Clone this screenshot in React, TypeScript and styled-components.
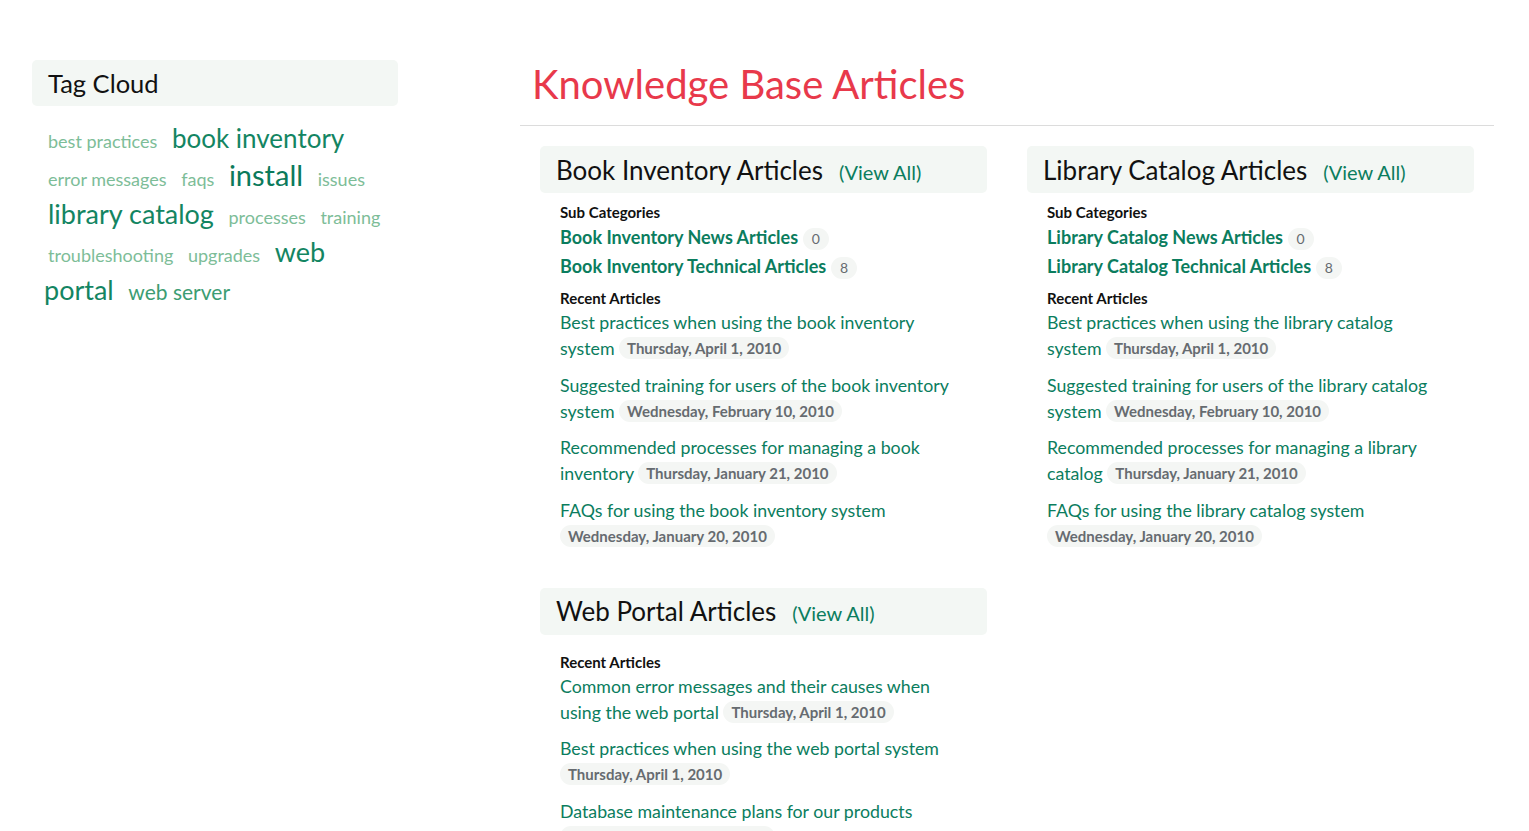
import React from "react";
import styled, { createGlobalStyle } from "styled-components";

const GlobalStyle = createGlobalStyle`
  html, body { margin: 0; padding: 0; background: #ffffff; }
  body { font-family: Lato, "Open Sans", Arial, sans-serif; color: #111; }
  a { text-decoration: none; }
`;

const Page = styled.div`
  display: flex;
  align-items: flex-start;
  padding: 60px 35px 0 32px;
`;

const Sidebar = styled.aside`
  width: 366px;
  flex: none;
`;

const PanelHeader = styled.div`
  height: 46px;
  display: flex;
  align-items: center;
  padding-left: 16px;
  background: #f3f7f4;
  border-radius: 5px;
`;

const SidebarTitle = styled.h2`
  margin: 0;
  font-size: 25.5px;
  font-weight: 400;
  color: #111;
`;

const Cloud = styled.div`
  margin-top: 16px;
  padding: 0 2px 0 12px;
  font-size: 18px;
  line-height: 38px;
`;

const Tag = styled.a<{ $size: number; $color: string }>`
  font-size: ${(p) => p.$size}px;
  line-height: 1;
  color: ${(p) => p.$color};
  padding: 0 4px;
  margin-right: 2px;
`;

const Main = styled.main`
  margin-left: 122px;
  flex: 1;
`;

const Title = styled.h1`
  margin: 0;
  padding-left: 12px;
  font-size: 40px;
  line-height: 48px;
  font-weight: 400;
  color: #e8394b;
`;

const Rule = styled.hr`
  margin: 17px 0 0;
  border: 0;
  border-top: 1px solid #dcdcdc;
`;

const Columns = styled.div`
  display: grid;
  grid-template-columns: 1fr 1fr;
  padding-top: 20px;
`;

const Section = styled.section`
  padding: 0 20px;
  margin-bottom: 39px;
`;

const SectionHeader = styled(PanelHeader)`
  height: 47px;
`;

const SectionTitle = styled.h2`
  margin: 0;
  font-size: 26px;
  font-weight: 400;
  color: #111;
`;

const ViewAll = styled.a`
  margin-left: 16px;
  margin-top: 4px;
  font-size: 20px;
  color: #0b7d5e;
`;

const SectionBody = styled.div`
  padding: 0 30px 0 20px;
`;

const Label = styled.div<{ $gap: number }>`
  margin-top: ${(p) => p.$gap}px;
  font-size: 15px;
  line-height: 22px;
  font-weight: 700;
  color: #111;
`;

const SubRow = styled.div`
  font-size: 18px;
  line-height: 29px;
`;

const SubLink = styled.a`
  font-weight: 700;
  color: #0b7d5e;
`;

const Count = styled.span`
  display: inline-block;
  padding: 0 9px;
  line-height: 22px;
  border-radius: 11px;
  background: #f4f6f4;
  font-size: 14px;
  color: #666b70;
`;

const Article = styled.div`
  font-size: 17.75px;
  line-height: 26px;
  & + & {
    margin-top: 10.5px;
  }
`;

const ArticleLink = styled.a`
  color: #0b7d5e;
`;

const DateBadge = styled.span`
  display: inline-block;
  padding: 0 8px;
  line-height: 22px;
  border-radius: 11px;
  background: #f4f6f4;
  font-size: 15px;
  font-weight: 700;
  color: #666b70;
  vertical-align: 1px;
`;

const tags: { text: string; size: number; color: string }[] = [
  { text: "best practices", size: 18, color: "#7dbd98" },
  { text: "book inventory", size: 26, color: "#138562" },
  { text: "error messages", size: 18, color: "#7dbd98" },
  { text: "faqs", size: 18, color: "#7dbd98" },
  { text: "install", size: 29, color: "#0b7a5b" },
  { text: "issues", size: 18, color: "#7dbd98" },
  { text: "library catalog", size: 27, color: "#138562" },
  { text: "processes", size: 18, color: "#7dbd98" },
  { text: "training", size: 18, color: "#7dbd98" },
  { text: "troubleshooting", size: 18, color: "#7dbd98" },
  { text: "upgrades", size: 18, color: "#7dbd98" },
  { text: "web portal", size: 27, color: "#138562" },
  { text: "web server", size: 21, color: "#3c9d73" },
];

type ArticleData = { title: string; date: string };
type SectionData = {
  name: string;
  subs: { name: string; count: number }[];
  articles: ArticleData[];
};

const sections: SectionData[] = [
  {
    name: "Book Inventory Articles",
    subs: [
      { name: "Book Inventory News Articles", count: 0 },
      { name: "Book Inventory Technical Articles", count: 8 },
    ],
    articles: [
      { title: "Best practices when using the book inventory system", date: "Thursday, April 1, 2010" },
      { title: "Suggested training for users of the book inventory system", date: "Wednesday, February 10, 2010" },
      { title: "Recommended processes for managing a book inventory", date: "Thursday, January 21, 2010" },
      { title: "FAQs for using the book inventory system", date: "Wednesday, January 20, 2010" },
    ],
  },
  {
    name: "Library Catalog Articles",
    subs: [
      { name: "Library Catalog News Articles", count: 0 },
      { name: "Library Catalog Technical Articles", count: 8 },
    ],
    articles: [
      { title: "Best practices when using the library catalog system", date: "Thursday, April 1, 2010" },
      { title: "Suggested training for users of the library catalog system", date: "Wednesday, February 10, 2010" },
      { title: "Recommended processes for managing a library catalog", date: "Thursday, January 21, 2010" },
      { title: "FAQs for using the library catalog system", date: "Wednesday, January 20, 2010" },
    ],
  },
  {
    name: "Web Portal Articles",
    subs: [],
    articles: [
      { title: "Common error messages and their causes when using the web portal", date: "Thursday, April 1, 2010" },
      { title: "Best practices when using the web portal system", date: "Thursday, April 1, 2010" },
      { title: "Database maintenance plans for our products", date: "Wednesday, January 20, 2010" },
    ],
  },
];

function ArticleSection({ data }: { data: SectionData }) {
  const hasSubs = data.subs.length > 0;
  return (
    <Section>
      <SectionHeader>
        <SectionTitle>{data.name}</SectionTitle>
        <ViewAll href="#">(View All)</ViewAll>
      </SectionHeader>
      <SectionBody>
        {hasSubs && (
          <>
            <Label $gap={8}>Sub Categories</Label>
            {data.subs.map((s) => (
              <SubRow key={s.name}>
                <SubLink href="#">{s.name}</SubLink> <Count>{s.count}</Count>
              </SubRow>
            ))}
          </>
        )}
        <Label $gap={hasSubs ? 6 : 16}>Recent Articles</Label>
        {data.articles.map((a) => (
          <Article key={a.title}>
            <ArticleLink href="#">{a.title}</ArticleLink> <DateBadge>{a.date}</DateBadge>
          </Article>
        ))}
      </SectionBody>
    </Section>
  );
}

export default function App() {
  return (
    <>
      <GlobalStyle />
      <Page>
        <Sidebar>
          <PanelHeader>
            <SidebarTitle>Tag Cloud</SidebarTitle>
          </PanelHeader>
          <Cloud>
            {tags.map((t) => (
              <React.Fragment key={t.text}>
                <Tag href="#" $size={t.size} $color={t.color}>
                  {t.text}
                </Tag>{" "}
              </React.Fragment>
            ))}
          </Cloud>
        </Sidebar>
        <Main>
          <Title>Knowledge Base Articles</Title>
          <Rule />
          <Columns>
            {sections.map((s) => (
              <ArticleSection key={s.name} data={s} />
            ))}
          </Columns>
        </Main>
      </Page>
    </>
  );
}
